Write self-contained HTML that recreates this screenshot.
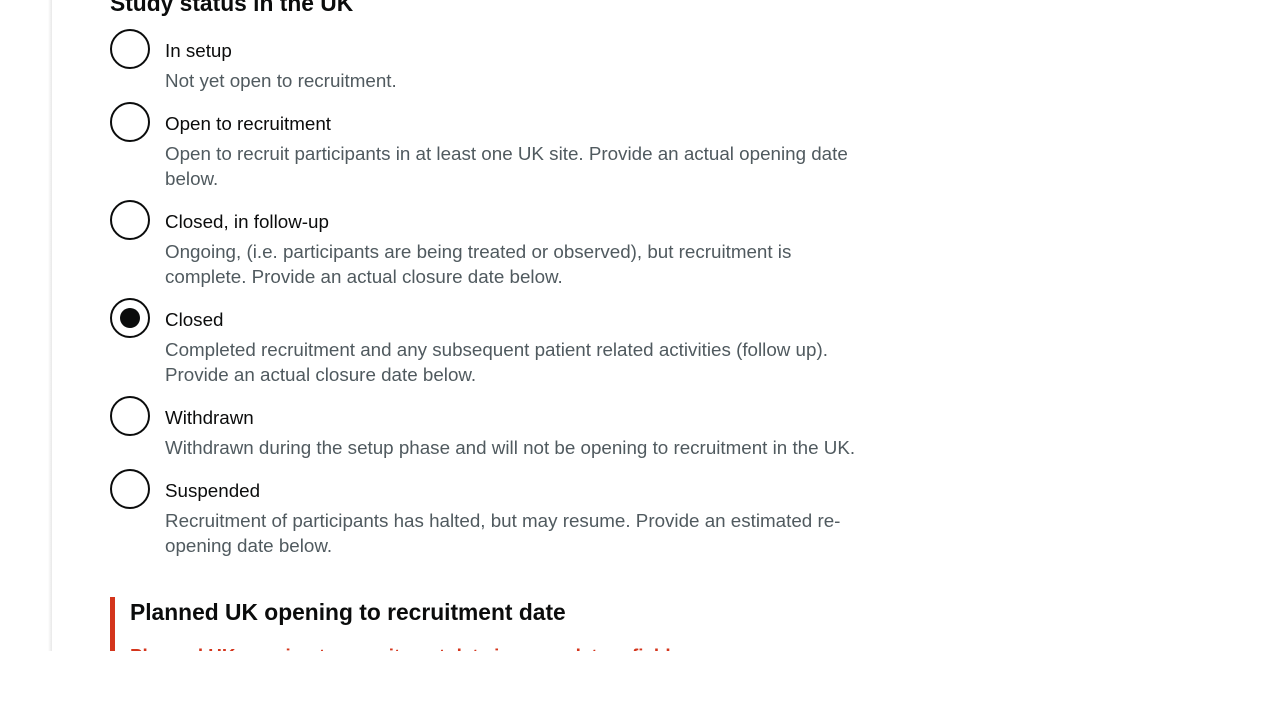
<!DOCTYPE html>
<html><head><style>
html,body{margin:0;padding:0;background:#fff;width:1280px;height:720px;overflow:hidden;font-family:"Liberation Sans",Arial,sans-serif;}
.clip{position:absolute;left:0;top:0;width:1280px;height:651px;overflow:hidden;}
.edge{position:absolute;left:48px;top:0;width:4px;height:651px;background:linear-gradient(to right,#fff,#e8e8e8);}
.h{position:absolute;left:110px;font-weight:bold;color:#0b0c0c;font-size:22.8px;}
.r{position:absolute;left:110px;width:36px;height:36px;border:2px solid #0b0c0c;border-radius:50%;}
.r.on::after{content:"";position:absolute;left:8px;top:8px;width:20px;height:20px;border-radius:50%;background:#0b0c0c;}
.l{position:absolute;left:165px;font-size:18.8px;color:#0b0c0c;}
.d{position:absolute;left:165px;width:695px;font-size:18.8px;line-height:25px;color:#505a5f;}
.bar{position:absolute;left:110px;top:597px;width:5px;height:60px;background:#d4351c;}
.err{position:absolute;left:130px;top:645px;font-weight:bold;font-size:18.8px;color:#d4351c;}
</style></head><body>
<div class="clip">
<div class="edge"></div>
<div class="h" style="top:-10px">Study status in the UK</div>
<div class="r" style="top:29px"></div><div class="l" style="top:40px">In setup</div>
<div class="d" style="top:68px">Not yet open to recruitment.</div>
<div class="r" style="top:102px"></div><div class="l" style="top:113px">Open to recruitment</div>
<div class="d" style="top:141px">Open to recruit participants in at least one UK site. Provide an actual opening date below.</div>
<div class="r" style="top:200px"></div><div class="l" style="top:211px">Closed, in follow-up</div>
<div class="d" style="top:239px">Ongoing, (i.e. participants are being treated or observed), but recruitment is complete. Provide an actual closure date below.</div>
<div class="r on" style="top:298px"></div><div class="l" style="top:309px">Closed</div>
<div class="d" style="top:337px">Completed recruitment and any subsequent patient related activities (follow up). Provide an actual closure date below.</div>
<div class="r" style="top:396px"></div><div class="l" style="top:407px">Withdrawn</div>
<div class="d" style="top:435px">Withdrawn during the setup phase and will not be opening to recruitment in the UK.</div>
<div class="r" style="top:469px"></div><div class="l" style="top:480px">Suspended</div>
<div class="d" style="top:508px">Recruitment of participants has halted, but may resume. Provide an estimated re-opening date below.</div>
<div class="bar"></div>
<div class="h" style="left:130px;top:599px">Planned UK opening to recruitment date</div>
<div class="err">Planned UK opening to recruitment date is a mandatory field</div>
</div>
</body></html>
